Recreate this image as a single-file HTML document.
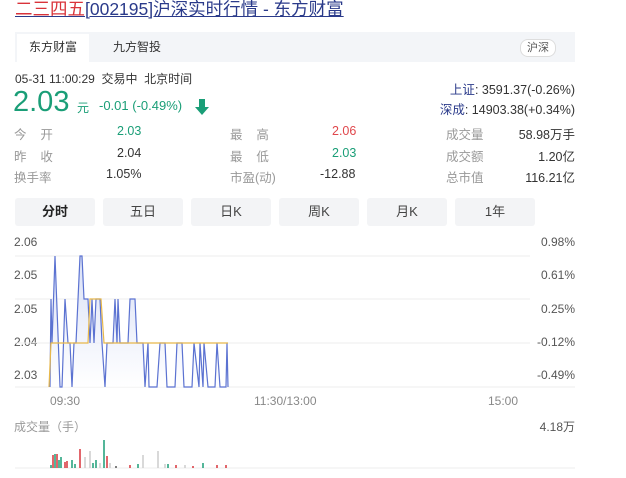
<!DOCTYPE html>
<html><head><meta charset="utf-8"><style>
body{margin:0;width:626px;height:478px;background:#fff;font-family:"Liberation Sans","Noto Sans CJK SC",sans-serif;position:relative;overflow:hidden;color:#333}
.a{position:absolute;white-space:nowrap}
.rr{position:absolute;white-space:nowrap;right:51px}
.g{color:#1a9e77}.r{color:#e0474c}.l{color:#999}
.btn{position:absolute;top:198px;width:80px;height:28px;background:#f3f4f6;border-radius:3px;text-align:center;line-height:28px;font-size:13px;color:#444}
</style></head><body>
<div class="a" style="left:15px;top:-4px;font-size:17.5px;color:#2a3a8a;text-decoration:underline"><span style="color:#d9333a">二三四五</span>[002195]沪深实时行情 - 东方财富</div>
<div class="a" style="left:15px;top:32px;width:560px;height:30px;background:#f3f5f8"></div>
<div class="a" style="left:17px;top:34px;width:72px;height:28px;background:#fff;font-size:12px;line-height:27px;text-align:center">东方财富</div>
<div class="a" style="left:113px;top:34px;font-size:12px;line-height:27px">九方智投</div>
<div class="a" style="left:520px;top:39px;width:34px;height:16px;border:1px solid #ddd;border-radius:8px;background:#fff;font-size:11px;line-height:16px;text-align:center;color:#555">沪深</div>
<div class="a" style="left:15px;top:70px;font-size:12px">05-31 11:00:29&nbsp; 交易中&nbsp; 北京时间</div>
<div class="a g" style="left:13px;top:86px;font-size:29px">2.03</div>
<div class="a g" style="left:77px;top:99px;font-size:12px">元</div>
<div class="a g" style="left:99px;top:98px;font-size:13px">-0.01 (-0.49%)</div>
<svg class="a" style="left:195px;top:99px" width="14" height="16"><path d="M4 0h6v8h4L7 16 0 8h4z" fill="#1a9e77"/></svg>
<div class="rr" style="top:79px;font-size:12.5px"><span style="color:#2a3a8a">上证</span>: 3591.37(-0.26%)</div>
<div class="rr" style="top:99px;font-size:12.5px"><span style="color:#2a3a8a">深成</span>: 14903.38(+0.34%)</div>
<div style="font-size:12.5px">
<div class="a l" style="left:14px;top:124px">今&nbsp;&nbsp;&nbsp; 开</div><div class="a g" style="left:117px;top:124px">2.03</div>
<div class="a l" style="left:14px;top:146px">昨&nbsp;&nbsp;&nbsp; 收</div><div class="a" style="left:117px;top:146px">2.04</div>
<div class="a l" style="left:14px;top:167px">换手率</div><div class="a" style="left:106px;top:167px">1.05%</div>
<div class="a l" style="left:230px;top:124px">最&nbsp;&nbsp;&nbsp; 高</div><div class="a r" style="left:332px;top:124px">2.06</div>
<div class="a l" style="left:230px;top:146px">最&nbsp;&nbsp;&nbsp; 低</div><div class="a g" style="left:332px;top:146px">2.03</div>
<div class="a l" style="left:230px;top:167px">市盈(动)</div><div class="a" style="left:320px;top:167px">-12.88</div>
<div class="a l" style="left:446px;top:124px">成交量</div><div class="rr" style="top:124px">58.98万手</div>
<div class="a l" style="left:446px;top:146px">成交额</div><div class="rr" style="top:146px">1.20亿</div>
<div class="a l" style="left:446px;top:167px">总市值</div><div class="rr" style="top:167px">116.21亿</div>
</div>
<div class="btn" style="left:15px;font-weight:bold;color:#222">分时</div>
<div class="btn" style="left:103px">五日</div>
<div class="btn" style="left:191px">日K</div>
<div class="btn" style="left:279px">周K</div>
<div class="btn" style="left:367px">月K</div>
<div class="btn" style="left:455px">1年</div>
<div style="font-size:12px;color:#555">
<div class="a" style="left:14px;top:235px">2.06</div>
<div class="a" style="left:14px;top:268px">2.05</div>
<div class="a" style="left:14px;top:302px">2.05</div>
<div class="a" style="left:14px;top:335px">2.04</div>
<div class="a" style="left:14px;top:368px">2.03</div>
<div class="rr" style="top:235px">0.98%</div>
<div class="rr" style="top:268px">0.61%</div>
<div class="rr" style="top:302px">0.25%</div>
<div class="rr" style="top:335px;background:#fff">-0.12%</div>
<div class="rr" style="top:368px">-0.49%</div>
<div class="a" style="left:50px;top:394px;color:#888">09:30</div>
<div class="a" style="left:254px;top:394px;color:#888">11:30/13:00</div>
<div class="a" style="left:488px;top:394px;color:#888">15:00</div>
<div class="a" style="left:14px;top:418px;color:#999">成交量（手）</div>
<div class="rr" style="top:418px">4.18万</div>
</div>
<svg class="a" style="left:0;top:0" width="626" height="478">
<defs><linearGradient id="f" x1="0" y1="0" x2="0" y2="1"><stop offset="0" stop-color="#c9d3f2"/><stop offset="1" stop-color="#fff"/></linearGradient></defs>
<g stroke="#eee" stroke-width="1"><line x1="15" y1="256" x2="530" y2="256"/><line x1="15" y1="299" x2="530" y2="299"/><line x1="15" y1="343" x2="530" y2="343"/><line x1="15" y1="387" x2="575" y2="387"/><line x1="15" y1="468" x2="575" y2="468"/></g>
<polygon fill="url(#f)" opacity=".7" points="50,387 51,299 52,343 55,256 60,387 62,387 65,299 68,343 70,343 72,387 74,343 76,343 80,256 82,256 84,299 88,299 90,343 92,299 94,343 96,299 100,299 102,343 105,387 107,343 113,343 115,299 117,343 118,299 120,343 128,343 130,299 135,299 137,343 143,343 145,387 148,343 149,387 157,387 160,343 165,343 167,387 175,387 177,343 182,343 184,387 192,387 194,343 199,387 200,343 203,387 204,343 208,387 215,387 217,343 220,387 226,387 227,343 228,387"/>
<polyline fill="none" stroke="#5b72d1" stroke-width="1.2" points="50,387 51,299 52,343 55,256 60,387 62,387 65,299 68,343 70,343 72,387 74,343 76,343 80,256 82,256 84,299 88,299 90,343 92,299 94,343 96,299 100,299 102,343 105,387 107,343 113,343 115,299 117,343 118,299 120,343 128,343 130,299 135,299 137,343 143,343 145,387 148,343 149,387 157,387 160,343 165,343 167,387 175,387 177,343 182,343 184,387 192,387 194,343 199,387 200,343 203,387 204,343 208,387 215,387 217,343 220,387 226,387 227,343 228,387"/>
<polyline fill="none" stroke="#e8b84a" stroke-width="1.2" points="49,387 51,343 88,343 90,299 101,299 104,343 228,343"/>
<g stroke-width="1.5">
<line x1="51" y1="468" x2="51" y2="465" stroke="#1a9e77"/><line x1="53" y1="468" x2="53" y2="455" stroke="#d9333a"/><line x1="55" y1="468" x2="55" y2="454" stroke="#1a9e77"/><line x1="57" y1="468" x2="57" y2="454" stroke="#d9333a"/><line x1="59" y1="468" x2="59" y2="460" stroke="#1a9e77"/><line x1="61" y1="468" x2="61" y2="457" stroke="#1a9e77"/><line x1="65" y1="468" x2="65" y2="462" stroke="#d9333a"/><line x1="67" y1="468" x2="67" y2="461" stroke="#d9333a"/><line x1="72" y1="468" x2="72" y2="460" stroke="#1a9e77"/><line x1="75" y1="468" x2="75" y2="464" stroke="#1a9e77"/><line x1="80" y1="468" x2="80" y2="449" stroke="#d9333a"/><line x1="85" y1="468" x2="85" y2="457" stroke="#ccc"/><line x1="90" y1="468" x2="90" y2="451" stroke="#ccc"/><line x1="93" y1="468" x2="93" y2="463" stroke="#1a9e77"/><line x1="96" y1="468" x2="96" y2="460" stroke="#1a9e77"/><line x1="100" y1="468" x2="100" y2="463" stroke="#ccc"/><line x1="104" y1="468" x2="104" y2="440" stroke="#1a9e77"/><line x1="107" y1="468" x2="107" y2="456" stroke="#d9333a"/><line x1="110" y1="468" x2="110" y2="463" stroke="#ccc"/><line x1="116" y1="468" x2="116" y2="466" stroke="#555"/><line x1="130" y1="468" x2="130" y2="465" stroke="#d9333a"/><line x1="138" y1="468" x2="138" y2="464" stroke="#1a9e77"/><line x1="143" y1="468" x2="143" y2="455" stroke="#ccc"/><line x1="158" y1="468" x2="158" y2="451" stroke="#ccc"/><line x1="165" y1="468" x2="165" y2="464" stroke="#ccc"/><line x1="168" y1="468" x2="168" y2="464" stroke="#1a9e77"/><line x1="176" y1="468" x2="176" y2="465" stroke="#d9333a"/><line x1="185" y1="468" x2="185" y2="465" stroke="#ccc"/><line x1="193" y1="468" x2="193" y2="466" stroke="#d9333a"/><line x1="203" y1="468" x2="203" y2="463" stroke="#1a9e77"/><line x1="217" y1="468" x2="217" y2="465" stroke="#d9333a"/><line x1="226" y1="468" x2="226" y2="465" stroke="#d9333a"/>
</g>
</svg>
</body></html>
